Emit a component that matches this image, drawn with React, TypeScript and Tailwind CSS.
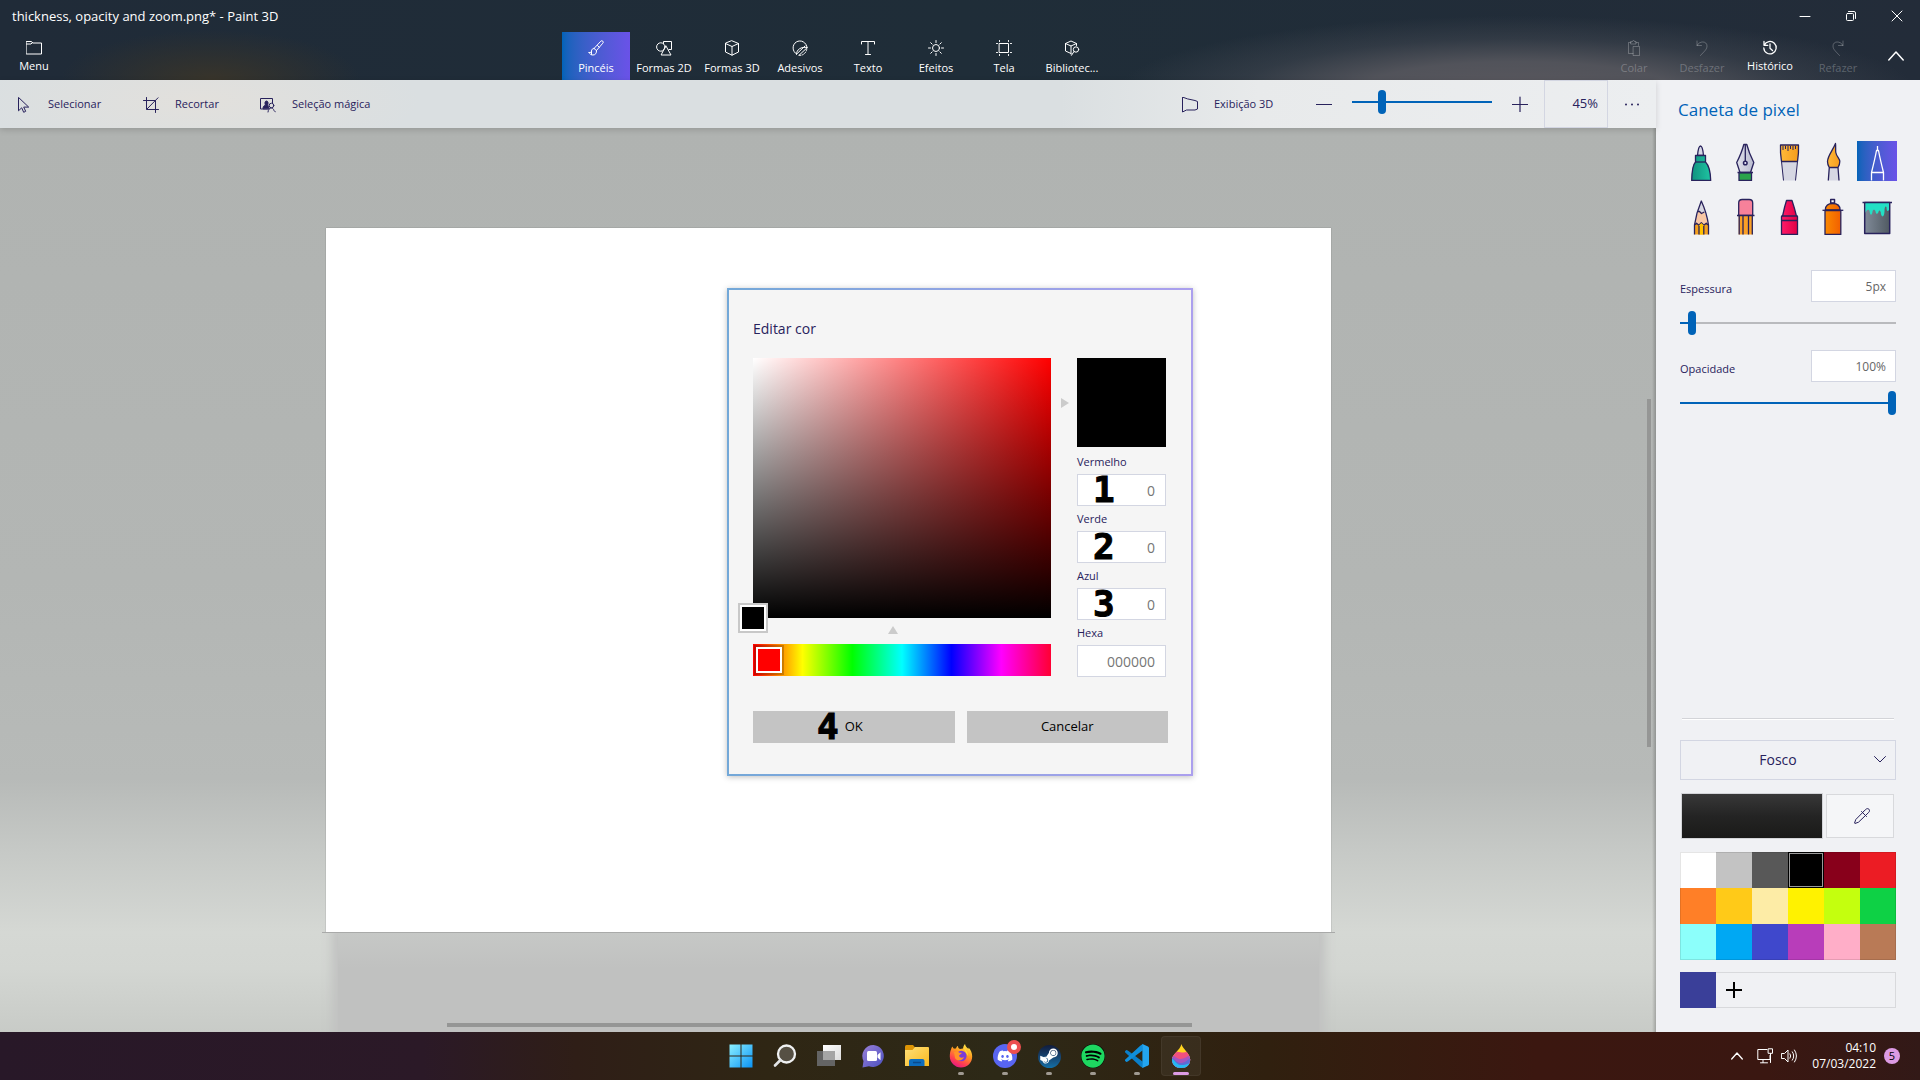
import { useState, type ReactNode } from "react";
import { FaDiscord, FaSpotify, FaSteamSymbol } from "react-icons/fa";

const line = {
  fill: "none",
  stroke: "currentColor",
  strokeWidth: 1,
  strokeLinecap: "round",
  strokeLinejoin: "round",
} as const;

function Icon({ children, size = 16 }: { children: ReactNode; size?: number }) {
  return (
    <svg width={size} height={size} viewBox="0 0 16 16" aria-hidden="true" className="shrink-0" {...line}>
      {children}
    </svg>
  );
}

/* ---------- ribbon icons ---------- */

const FolderIcon = () => (
  <Icon>
    <path d="M.5 1.500h5l1 1.500h9v11H.5zM.5 4h4.500l1.500-1.500" />
  </Icon>
);
const BrushIcon = () => (
  <Icon>
    <path d="M6 8.500 12.800 1.200a1.400 1.400 0 0 1 2 2L8.500 10.500M6 8.500l2.500 2M6 8.500c-1.500 0-2.500 1-2.500 2.500 0 1.200-.8 1.800-2.500 1.500M8.500 10.500c.3 2.500-1 4.500-3.500 4.500-2 0-3.300-.9-4-2.500M9.500 5.500l1.800 1.800M3.500 11.500v3" />
  </Icon>
);
const Shapes2DIcon = () => (
  <Icon>
    <circle cx="4.800" cy="7" r="4.200" />
    <path d="M7.500 3.500v-2h8v8h-2.500M10 6l5 9H5.500z" />
  </Icon>
);
const CubeIcon = () => (
  <Icon>
    <path d="M8 .8 14.500 3.500v8.500L8 15.200 1.500 12V3.500zM1.500 3.500 8 6.500l6.500-3M8 6.500v8.700" />
  </Icon>
);
const StickerIcon = () => (
  <Icon>
    <path d="M4.500 14A7 7 0 1 1 15 7.500M4.500 14C4.500 9.500 9 6.500 15 7.500M4.500 14.200 13 6M7 15.300l8-7.500" />
    <path d="M7 15.300c4 .5 7.500-2.500 8-7.300" strokeDasharray="1.500 1.500" />
  </Icon>
);
const TextIcon = () => (
  <Icon>
    <path d="M1.500 4V1.500h13V4M8 1.500v13M5.500 14.500h5" />
  </Icon>
);
const EffectsIcon = () => (
  <Icon>
    <circle cx="8" cy="8" r="3.500" />
    <path d="M8 .5v2M8 13.500v2M.5 8h2M13.500 8h2M2.700 2.700l1.400 1.400M11.900 11.900l1.400 1.400M13.300 2.700l-1.400 1.400M4.100 11.900l-1.400 1.400" />
  </Icon>
);
const CanvasIcon = () => (
  <Icon>
    <path d="M3.500 3.500h9v9h-9zM3.500.5v1M12.500.5v1M3.500 14.500v1M12.500 14.500v1M.5 3.500h1M.5 12.500h1M14.500 3.500h1M14.500 12.500h1" />
  </Icon>
);
const LibraryIcon = () => (
  <Icon>
    <path d="M7 13.500 1.500 11V3.500L7 1l5.500 2.500v2M1.500 3.500 7 6l5.500-2.500M7 6v8" />
    <circle cx="12" cy="9.500" r="2.700" />
    <path d="m10 11.500-2.500 3.800" />
  </Icon>
);
const PasteIcon = () => (
  <Icon>
    <path d="M7 13.500H2.500v-11h2.500M10 2.500h2.500v3M5 1.500h1.500a1 1 0 0 1 2 0H10v2.500H5zM7.500 6.500h6v9h-6z" />
  </Icon>
);
const UndoIcon = () => (
  <Icon>
    <path d="M3 1v4.500h4.500M3 5.500C5.500.5 13 .8 13 6c0 3.500-3 5.500-6.500 9.500" />
  </Icon>
);
const RedoIcon = () => (
  <Icon>
    <path d="M13 1v4.500H8.500M13 5.500C10.500.5 3 .8 3 6c0 3.500 3 5.500 6.500 9.500" />
  </Icon>
);
const HistoryIcon = () => (
  <Icon>
    <path strokeWidth="1.300" d="M2 1.500v3.800h3.800M2.300 5.200A6.200 6.200 0 1 1 1.800 8M8 4v4.200l2.500 2.300" />
  </Icon>
);

/* ---------- toolbar icons ---------- */

const CursorIcon = () => (
  <Icon>
    <path d="M2.500.8v13l3.200-3 2 4.500 2-1-2-4.200h4.600z" />
  </Icon>
);
const CropIcon = () => (
  <Icon>
    <path d="M3.500.5v12h12M.5 3.500h12v12M4 12 15 .8" />
  </Icon>
);
const MagicIcon = () => (
  <Icon>
    <path d="M7.500 12H.5V1.500h12V6" />
    <path fill="currentColor" d="M3 11.500c0-2 1-3 2.500-3.200C4.500 6 5 4 6.500 4S8.500 6 7.700 8L9 11.500z" />
    <circle cx="11.500" cy="8.500" r="2.300" />
    <path d="M8 15c.2-2.500 1.500-4 3.500-4 1.200 0 2 1 2.500 2.500l1.500 1.500" />
  </Icon>
);
const View3DIcon = () => (
  <Icon>
    <path d="M.5.5v14.500l4-2h8.500l2.500-1V4.500L13 3.500 6 2z" />
  </Icon>
);
const EyedropperIcon = () => (
  <Icon>
    <path d="m8.500 4.500 3.200-3c1-1 2.200-1.200 3.200-.3.900 1 .8 2.200-.2 3.200L11.500 7.500M7.500 3.500l5 5M8.500 4.700 1.800 11.500.5 15.100l.4.400 3.600-1.300L11.500 7.500" />
  </Icon>
);

/* ---------- brush gallery drawings ---------- */

const ink = "#28225c";
function Tool({ children }: { children: ReactNode }) {
  return (
    <svg viewBox="0 0 40 40" className="size-10" fill="none" stroke={ink} strokeWidth="1.300" strokeLinejoin="round" aria-hidden="true">
      {children}
    </svg>
  );
}

const tools = [
  {
    name: "Marcador",
    art: (
      <Tool>
        <path fill="#d6d7e3" d="M16.500 14.500C17 9 18 5 19.500 5s2.500 4 3 9.500z" />
        <path fill="url(#g-teal)" d="M14.500 14.500h10V21c3 3 5 9 5.200 18.500h-19C10.900 30 11.500 24 14.500 21z" />
        <path d="M14.500 21h10" />
      </Tool>
    ),
  },
  {
    name: "Caneta de caligrafia",
    art: (
      <Tool>
        <path fill="#2aa34b" d="M14 31.500h12.500v8H14z" />
        <path fill="url(#g-steel)" d="M18.800 3.500h3c1.500 6 3.700 11.500 7 18l-3.300 10h-10.500l-3.300-10c3.300-6.500 5.600-12 7.100-18z" />
        <path d="M20.300 4v16M12.500 31.500h15.500" />
        <circle cx="20.300" cy="22" r="1.800" fill="#eef" strokeWidth="1.500" />
      </Tool>
    ),
  },
  {
    name: "Pincel a óleo",
    art: (
      <Tool>
        <path fill="#d6d7e3" stroke="none" d="M12.500 20.500h16l-2 19h-12z" />
        <path fill="url(#g-gold)" d="M11.500 4h18q.4 8-1 16.500h-16Q11.100 12 11.500 4z" />
        <path d="m12.500 20.500 2 19M28.500 20.500l-2 19M14 5v4M16.500 5v3M19 5v5M21.500 5v3M24 5v4M26.500 5v3" strokeWidth="1" />
      </Tool>
    ),
  },
  {
    name: "Aquarela",
    art: (
      <Tool>
        <path fill="#d6d7e3" stroke="none" d="M16 26.500h9.500l.5 13H15z" />
        <path fill="url(#g-gold)" d="M22.500 2.500C20 9 14.500 15 14.500 20.500c0 2 .5 4 1.800 6h8.700c1.300-2 1.800-4 1.800-6 0-3-3.300-5-4-9-.4-3 .1-6-.3-9z" />
        <path d="m16.300 26.500-1 13M25 26.500l1 13" />
      </Tool>
    ),
  },
  {
    name: "Caneta de pixel",
    art: (
      <Tool>
        <path stroke="#fff" d="M14.500 39.500v-8c1.500-6 3.700-15 5-22h2c1.300 7 3.500 16 5 22v8M14.500 31.500h12M20.500 9.500V5" />
      </Tool>
    ),
  },
  {
    name: "Lápis",
    art: (
      <Tool>
        <path fill="#f9c7a4" stroke="none" d="M20.300 6 27.500 29v2h-14v-2z" />
        <path fill="#d6d7e3" stroke="none" d="m20.300 6 3.500 12-6.500-2z" />
        <path fill="#f5a01d" d="m13.500 39.500v-9.500l2-1.800 2.500 2 2.300-2.500 2.500 2.500 2.500-2 2.200 2v9.300" />
        <path fill="#ffc000" stroke="none" d="M18 30.500 20.300 28l2.500 2.500v9H18z" />
        <path d="M13.500 30c1.300-8.500 3.800-17 6.800-24 3.200 7 6 15.500 7.200 24M18 31v8.500M22.800 31v8.500M16.500 16.500h2l2 2 2.800-1.500" />
      </Tool>
    ),
  },
  {
    name: "Borracha",
    art: (
      <Tool>
        <path fill="#f7819a" d="M13.700 20.500V8q0-3.500 3.500-3.500h7q3.500 0 3.500 3.500v12.500z" />
        <path fill="#fba026" stroke="none" d="M13.700 20.500h14v19h-14z" />
        <path d="M12 20.500h17.500M14.200 20.500v19M27.300 20.500v19M18 20.500v19M23.500 20.500v19" />
      </Tool>
    ),
  },
  {
    name: "Giz de cera",
    art: (
      <Tool>
        <path fill="url(#g-pink)" d="M17.500 5.500h5.500c1.500 4.500 3.200 10 4.300 15l1.200 1v18h-16v-18l1.200-1c1-5 2.300-10.500 3.800-15z" />
        <path d="M12.500 21h16M12.500 25.500h16" />
      </Tool>
    ),
  },
  {
    name: "Spray",
    art: (
      <Tool>
        <path fill="#fff" strokeWidth="1.500" d="M17.700 4.500h3.800V8h-3.800z" />
        <path fill="url(#g-orange)" d="M12.300 15c0-4.500 3-6.500 7.300-6.500s7.500 2 7.500 6.500zM12 15.500h15.800v24H12z" />
        <path d="M9.500 15.300h20.800" />
      </Tool>
    ),
  },
  {
    name: "Preenchimento",
    art: (
      <Tool>
        <path fill="url(#g-slate)" strokeWidth="1.500" d="M7.700 7.500h25v31h-25z" />
        <path fill="#23e0c5" stroke="none" d="M8.500 8h23.500v7c-1.500 2-2.500 1-2.500-3-1-1.500-2 0-2 4 0 7-3.500 7-3.800 1-.8-2-1.900-2-2.200 0-1 2.500-2.500 2.500-3-.5-.6-2.500-2.500-2.500-3 0-.5 4.500-2.500 4-3-.5-.5-2-3-2-4 2z" />
        <path strokeWidth="1.500" d="M5.500 7.500h29.500" />
      </Tool>
    ),
  },
];

function Gradients() {
  const list: [string, string, string][] = [
    ["g-teal", "#10927f", "#1fc4a2"],
    ["g-steel", "#dfe0ea", "#b9bbcf"],
    ["g-gold", "#ffb93a", "#f59c1c"],
    ["g-pink", "#ff1a68", "#e00045"],
    ["g-orange", "#fb8a00", "#f25f00"],
    ["g-slate", "#808a98", "#505a62"],
  ];
  return (
    <svg className="absolute size-0" aria-hidden="true">
      <defs>
        {list.map(([id, a, b]) => (
          <linearGradient key={id} id={id}>
            <stop stopColor={a} />
            <stop offset="1" stopColor={b} />
          </linearGradient>
        ))}
      </defs>
    </svg>
  );
}

/* ---------- header ---------- */

const tabs = [
  { label: "Pincéis", icon: <BrushIcon /> },
  { label: "Formas 2D", icon: <Shapes2DIcon /> },
  { label: "Formas 3D", icon: <CubeIcon /> },
  { label: "Adesivos", icon: <StickerIcon /> },
  { label: "Texto", icon: <TextIcon /> },
  { label: "Efeitos", icon: <EffectsIcon /> },
  { label: "Tela", icon: <CanvasIcon /> },
  { label: "Bibliotec...", icon: <LibraryIcon /> },
];

function RibbonButton({ icon, label, active, dim }: { icon: ReactNode; label: string; active?: boolean; dim?: boolean }) {
  return (
    <button
      type="button"
      disabled={dim}
      className={
        "flex h-12 w-[68px] flex-col items-center gap-1 pt-2 text-[11px] leading-4 whitespace-nowrap " +
        (active ? "bg-linear-to-r from-[#0063b8] to-[#6a52e8] text-white" : dim ? "text-white/25" : "text-white")
      }
    >
      {icon}
      <span>{label}</span>
    </button>
  );
}

function Header() {
  return (
    <header className="bg-[#202b37] bg-[radial-gradient(ellipse_150px_50px_at_11%_100%,#38342a_0%,transparent_100%),radial-gradient(ellipse_400px_76px_at_79%_115%,rgba(90,88,94,1)_0%,rgba(84,85,92,0.95)_40%,rgba(70,75,84,0.45)_70%,rgba(50,58,68,0)_100%),linear-gradient(90deg,#202b38,#1f2d38_50%,#232c39)] text-white">
      <div className="flex h-8 items-center justify-between">
        <h1 className="pt-0.5 pl-3 text-[13px]">thickness, opacity and zoom.png* - Paint 3D</h1>
        <div className="flex">
          <button type="button" aria-label="Minimizar" className="grid h-8 w-[46px] place-items-center">
            <Icon>
              <path d="M3 8.500h10" />
            </Icon>
          </button>
          <button type="button" aria-label="Restaurar" className="grid h-8 w-[46px] place-items-center">
            <Icon>
              <rect x="3.500" y="5.500" width="7" height="7" rx="1" />
              <path d="M5.500 3.500h5.500q1.500 0 1.500 1.500v5.500" />
            </Icon>
          </button>
          <button type="button" aria-label="Fechar" className="grid h-8 w-[46px] place-items-center">
            <Icon>
              <path d="m3 3 10 10M13 3 3 13" />
            </Icon>
          </button>
        </div>
      </div>
      <div className="flex justify-between">
        <button type="button" className="flex h-12 w-[68px] flex-col items-center gap-0.5 pt-2 text-[11px] leading-4">
          <FolderIcon />
          <span>Menu</span>
        </button>
        <nav className="flex">
          {tabs.map((t, i) => (
            <RibbonButton key={t.label} {...t} active={i === 0} />
          ))}
        </nav>
        <div className="flex">
          <RibbonButton icon={<PasteIcon />} label="Colar" dim />
          <RibbonButton icon={<UndoIcon />} label="Desfazer" dim />
          <button type="button" className="flex h-12 w-[68px] flex-col items-center gap-0.5 pt-2 text-[11px] leading-4">
            <HistoryIcon />
            <span>Histórico</span>
          </button>
          <RibbonButton icon={<RedoIcon />} label="Refazer" dim />
          <button type="button" aria-label="Recolher" className="grid h-12 w-12 place-items-center">
            <Icon>
              <path strokeWidth="1.500" d="m.8 12 7.200-8 7.200 8" />
            </Icon>
          </button>
        </div>
      </div>
    </header>
  );
}

/* ---------- sliders ---------- */

function Slider({ label, value, onChange, rest }: { label: string; value: number; onChange: (n: number) => void; rest: string }) {
  return (
    <input
      type="range"
      aria-label={label}
      value={value}
      onChange={(e) => onChange(Number(e.target.value))}
      style={{ backgroundImage: `linear-gradient(90deg,#0063b8 ${value}%,${rest} ${value}%)` }}
      className="block h-6 w-full appearance-none bg-[length:100%_2px] bg-center bg-no-repeat [&::-webkit-slider-thumb]:h-6 [&::-webkit-slider-thumb]:w-2 [&::-webkit-slider-thumb]:appearance-none [&::-webkit-slider-thumb]:rounded-full [&::-webkit-slider-thumb]:bg-[#0063b8]"
    />
  );
}

function Toolbar() {
  const [zoom, setZoom] = useState(20);
  return (
    <div className="relative z-10 flex h-12 justify-between bg-[#dadfe1] bg-[radial-gradient(ellipse_220px_60px_at_200px_20px,#e2e0dc_0%,transparent_100%),linear-gradient(90deg,rgba(236,238,240,0)_64%,#e8eaeb_76%,#eceef0_100%)] text-[11px] text-[#28225c] shadow-[0_2px_6px_rgba(0,0,0,0.15)]">
      <div className="flex pt-px pl-4">
        <button type="button" className="flex w-[127px] items-center gap-4">
          <CursorIcon />
          Selecionar
        </button>
        <button type="button" className="flex w-[117px] items-center gap-4">
          <CropIcon />
          Recortar
        </button>
        <button type="button" className="flex items-center gap-4">
          <MagicIcon />
          Seleção mágica
        </button>
      </div>
      <div className="flex">
        <button type="button" className="flex w-[118px] items-center gap-4 pt-px">
          <View3DIcon />
          Exibição 3D
        </button>
        <button type="button" aria-label="Reduzir" className="grid w-12 place-items-center">
          <Icon>
            <path strokeWidth="1.200" d="M.5 8.500h15" />
          </Icon>
        </button>
        <div className="mx-1 w-[140px] pt-[10px]">
          <Slider label="Zoom" value={zoom} onChange={setZoom} rest="#0063b8" />
        </div>
        <button type="button" aria-label="Ampliar" className="grid w-12 place-items-center">
          <Icon>
            <path strokeWidth="1.200" d="M.5 8.500h15M8 1v15" />
          </Icon>
        </button>
        <input
          aria-label="Porcentagem de zoom"
          defaultValue="45%"
          className="w-16 border border-[#d3d6e2] pr-[9px] text-right text-[13px]"
        />
        <button type="button" aria-label="Mais opções" className="grid w-12 place-items-center">
          <svg width="16" height="4" viewBox="0 0 16 4" fill="currentColor" aria-hidden="true">
            <circle cx="2" cy="2.500" r="1" />
            <circle cx="8" cy="2.500" r="1" />
            <circle cx="14" cy="2.500" r="1" />
          </svg>
        </button>
      </div>
    </div>
  );
}

/* ---------- workspace ---------- */

function Workspace() {
  return (
    <main className="relative flex flex-1 flex-col items-center overflow-hidden bg-[linear-gradient(180deg,#b0b3b1_0%,#b3b6b4_50%,#b7bab8_72%,#c6c9c6_80%,#d5d8d4_89%,#d3d6d2_93%,#c8cbc7_100%)]">
      <div className="z-10 mt-[100px] w-[61%] max-w-[1005px] flex-1 bg-white shadow-[0_0_1px_rgba(0,0,0,0.4)]" />
      <div className="z-10 h-px w-[62%] max-w-[1013px] bg-[#a9aaa9]" />
      <div className="h-[99px] w-[61%] max-w-[1005px] px-3">
        <div className="h-[140px] bg-linear-to-b from-[#c6c8c6] to-[#c0c1c0] to-25% shadow-[0_0_10px_6px_#c1c2c1]" />
      </div>
      <div className="absolute bottom-[5px] left-[27%] z-10 h-1 w-[45%] bg-[#959695]" />
      <div className="absolute top-[30%] right-[5px] h-[348px] w-1 bg-[#959695]" />
      <div className="absolute inset-y-0 right-0 w-1 bg-linear-to-l from-black/20 to-transparent" />
    </main>
  );
}

/* ---------- side panel ---------- */

const palette = [
  { name: "Branco", cls: "bg-white" },
  { name: "Cinza claro", cls: "bg-[#c3c3c3]" },
  { name: "Cinza escuro", cls: "bg-[#585858]" },
  { name: "Preto", cls: "bg-black outline outline-[#9a9a9a] -outline-offset-2" },
  { name: "Vermelho escuro", cls: "bg-[#88001b]" },
  { name: "Vermelho", cls: "bg-[#ec1c24]" },
  { name: "Laranja", cls: "bg-[#ff7f27]" },
  { name: "Dourado", cls: "bg-[#ffca18]" },
  { name: "Bege", cls: "bg-[#fdeca6]" },
  { name: "Amarelo", cls: "bg-[#fff200]" },
  { name: "Lima", cls: "bg-[#c4ff0e]" },
  { name: "Verde", cls: "bg-[#0ed145]" },
  { name: "Turquesa", cls: "bg-[#8cfffb]" },
  { name: "Azul claro", cls: "bg-[#00a8f3]" },
  { name: "Índigo", cls: "bg-[#3f48cc]" },
  { name: "Roxo", cls: "bg-[#b83dba]" },
  { name: "Rosa", cls: "bg-[#ffaec8]" },
  { name: "Marrom", cls: "bg-[#b97a56]" },
];

function SidePanel() {
  const [size, setSize] = useState(4);
  const [opacity, setOpacity] = useState(100);
  return (
    <aside className="flex w-[264px] shrink-0 flex-col bg-[#f0f1f4] px-6 pt-4 pb-6 text-[#28225c]">
      <h2 className="-ml-0.5 text-[17px] leading-7 text-[#0063b8]">Caneta de pixel</h2>
      <div className="mt-[17px] -mr-px grid grid-cols-[repeat(5,40px)] justify-end gap-x-1 gap-y-[14px]">
        {tools.map((t, i) => (
          <button
            key={t.name}
            type="button"
            aria-label={t.name}
            className={i === 4 ? "h-10 bg-linear-to-r from-[#0063b8] to-[#6a52e8]" : "h-10"}
          >
            {t.art}
          </button>
        ))}
      </div>

      <div className="mt-[35px] flex justify-between">
        <label htmlFor="size" className="pt-[11px] text-[11px] leading-4">
          Espessura
        </label>
        <input id="size" defaultValue="5px" className="h-8 w-[85px] border border-[#d3d6e2] bg-white px-[9px] text-right text-xs text-[#666]" />
      </div>
      <div className="mt-[9px]">
        <Slider label="Espessura" value={size} onChange={setSize} rest="#b9babd" />
      </div>
      <div className="mt-[15px] flex justify-between">
        <label htmlFor="opacity" className="pt-[11px] text-[11px] leading-4">
          Opacidade
        </label>
        <input id="opacity" defaultValue="100%" className="h-8 w-[85px] border border-[#d3d6e2] bg-white px-[9px] text-right text-xs text-[#666]" />
      </div>
      <div className="mt-[9px]">
        <Slider label="Opacidade" value={opacity} onChange={setOpacity} rest="#b9babd" />
      </div>

      <div className="mx-0.5 mt-auto border-t border-b border-t-[#d3d4d8] border-b-white" />
      <div className="relative mt-5">
        <select
          aria-label="Material"
          defaultValue="Fosco"
          className="block h-10 w-full appearance-none border border-[#d3d6e2] pr-5 text-center text-sm [text-align-last:center]"
        >
          <option>Fosco</option>
        </select>
        <svg width="12" height="7" viewBox="0 0 12 7" className="pointer-events-none absolute top-4 right-[10px]" aria-hidden="true" {...line}>
          <path d="m.5.5 5.500 5.500L11.500.5" />
        </svg>
      </div>
      <div className="mt-[13px] flex items-center gap-[3px] pr-0.5 pl-px">
        <button type="button" aria-label="Cor atual" className="h-[46px] flex-1 border border-[#d3d4d8] bg-linear-to-b from-[#383838] via-[#242424] to-[#1a1a19]" />
        <button type="button" aria-label="Conta-gotas" className="grid h-11 w-[68px] place-items-center border border-[#d8d9dc] bg-[#f5f6f8] pl-1">
          <EyedropperIcon />
        </button>
      </div>
      <div className="relative mt-[13px] grid grid-cols-6 after:pointer-events-none after:absolute after:inset-0 after:border after:border-black/10">
        {palette.map((c) => (
          <button key={c.name} type="button" aria-label={c.name} className={"h-9 " + c.cls} />
        ))}
      </div>
      <div className="mt-3 flex h-9 border border-l-0 border-[#d8d9dc]">
        <button type="button" aria-label="Cor personalizada" className="-my-px w-9 bg-[#3a3f99]" />
        <button type="button" aria-label="Adicionar cor" className="grid w-9 place-items-center text-black">
          <Icon>
            <path strokeWidth="2" strokeLinecap="butt" d="M0 8h16M8 0v16" />
          </Icon>
        </button>
      </div>
    </aside>
  );
}

/* ---------- colour dialog ---------- */

function Mark({ children, place }: { children: string; place: string }) {
  return (
    <span
      className={
        "pointer-events-none absolute font-['DejaVu_Sans_Mono',monospace] text-[36px] leading-8 font-bold text-black [-webkit-text-stroke:1px_black] " + place
      }
    >
      {children}
    </span>
  );
}

const channels = [
  { id: "r", label: "Vermelho", value: "0", mark: "1" },
  { id: "g", label: "Verde", value: "0", mark: "2" },
  { id: "b", label: "Azul", value: "0", mark: "3" },
  { id: "hex", label: "Hexa", value: "000000", mark: "" },
];

function ColorDialog() {
  return (
    <div className="pointer-events-none fixed inset-0 z-20 flex items-center justify-center pb-4">
      <section
        role="dialog"
        aria-label="Editar cor"
        className="pointer-events-auto w-[466px] bg-linear-to-r from-[#73a8d8] to-[#ab9fee] p-0.5 shadow-[0_1px_6px_rgba(0,0,0,0.25)]"
      >
        <div className="bg-[#f5f5f5] pt-[27px] pr-[23px] pb-[31px] pl-6">
          <h2 className="text-sm leading-6 text-[#28225c]">Editar cor</h2>
          <div className="mt-[17px] flex">
            <div className="w-[298px]">
              <div className="relative h-[260px] bg-[linear-gradient(0deg,#000,transparent),linear-gradient(90deg,#fff,#f00)]">
                <div className="absolute -bottom-[13px] -left-[13px] size-[26px] border-2 border-white bg-black outline-2 outline-[#c8c8c8]" />
              </div>
              <svg width="10" height="8" viewBox="0 0 10 8" fill="#cbcbcb" className="mt-2 ml-[135px]" aria-hidden="true">
                <path d="M5 0l5 8H0z" />
              </svg>
              <input
                type="range"
                aria-label="Matiz"
                defaultValue={0}
                className="mt-[10px] block h-8 w-full appearance-none bg-[linear-gradient(90deg,#f00,#ff0_16.6%,#0f0_33.3%,#0ff_50%,#00f_66.6%,#f0f_83.3%,#f03)] px-[3px] [&::-webkit-slider-thumb]:size-[26px] [&::-webkit-slider-thumb]:appearance-none [&::-webkit-slider-thumb]:border-2 [&::-webkit-slider-thumb]:border-white [&::-webkit-slider-thumb]:bg-[#f00] [&::-webkit-slider-thumb]:shadow-[0_0_0_2px_rgba(0,0,0,0.2)]"
              />
            </div>
            <svg width="8" height="10" viewBox="0 0 8 10" fill="#cbcbcb" className="mr-2 ml-[10px] mt-10" aria-hidden="true">
              <path d="M0 0l8 5-8 5z" />
            </svg>
            <div className="w-[89px]">
              <div className="mb-[7px] h-[89px] bg-black" />
              {channels.map((c) => (
                <div key={c.id} className="relative mb-[5px] last:mb-0">
                  <label htmlFor={c.id} className="block text-[11px] leading-4 text-[#28225c]">
                    {c.label}
                  </label>
                  <input
                    id={c.id}
                    defaultValue={c.value}
                    className="mt-1 block h-8 w-full border border-[#d3d6e2] bg-white px-[10px] text-right text-sm text-[#767676]"
                  />
                  {c.mark && <Mark place="bottom-0 left-4">{c.mark}</Mark>}
                </div>
              ))}
            </div>
          </div>
          <div className="mt-[34px] grid grid-cols-2 gap-3">
            <button type="button" className="relative h-8 bg-[#c4c4c4] text-[13px] text-black">
              OK
              <Mark place="top-0 left-16">4</Mark>
            </button>
            <button type="button" className="h-8 bg-[#c4c4c4] text-[13px] text-black">
              Cancelar
            </button>
          </div>
        </div>
      </section>
    </div>
  );
}

/* ---------- taskbar ---------- */

function Art({ children }: { children: ReactNode }) {
  return (
    <svg width="24" height="24" viewBox="0 0 24 24" aria-hidden="true">
      {children}
    </svg>
  );
}

const apps = [
  {
    name: "Iniciar",
    art: (
      <Art>
        <defs>
          <linearGradient id="win" x2="1" y2="1">
            <stop stopColor="#8cf0ff" />
            <stop offset="1" stopColor="#0a93f5" />
          </linearGradient>
        </defs>
        <path fill="url(#win)" d="M.5.5h11v11H.5zM12.500.5h11v11h-11zM.5 12.500h11v11H.5zM12.500 12.500h11v11h-11z" />
      </Art>
    ),
  },
  {
    name: "Pesquisar",
    art: (
      <Art>
        <circle cx="13.500" cy="10" r="8.500" fill="#565044" stroke="#f0f1f2" strokeWidth="2.300" />
        <path d="M7.500 16 2 21.500" stroke="#e2e4e6" strokeWidth="2.600" strokeLinecap="round" />
      </Art>
    ),
  },
  {
    name: "Visão de tarefas",
    art: (
      <Art>
        <defs>
          <linearGradient id="tv" x2="1" y2="1">
            <stop stopColor="#fff" />
            <stop offset="1" stopColor="#dcdcdc" />
          </linearGradient>
        </defs>
        <path fill="#646464" d="M0 7h18v15H0z" />
        <path fill="url(#tv)" d="M6 1h18v15H6z" />
        <path fill="#a5a5a5" d="M6 7h12v9H6z" />
      </Art>
    ),
  },
  {
    name: "Chat",
    art: (
      <Art>
        <defs>
          <linearGradient id="chat" x1="0" y1="0" x2="1" y2="1">
            <stop stopColor="#9a80d8" />
            <stop offset="1" stopColor="#4a50c0" />
          </linearGradient>
        </defs>
        <path fill="url(#chat)" d="M12.500 1A11 11 0 1 1 8 22.300L1.500 23.500 2.500 17A11 11 0 0 1 12.500 1z" />
        <rect x="6" y="7" width="10" height="10" rx="1.500" fill="#fff" />
        <path fill="#fff" d="m16.500 11 3-2.800v8l-3-2.700z" />
      </Art>
    ),
  },
  {
    name: "Explorador de Arquivos",
    art: (
      <Art>
        <defs>
          <linearGradient id="fold" x2="1" y2="1">
            <stop stopColor="#ffe07a" />
            <stop offset="1" stopColor="#f9b81c" />
          </linearGradient>
        </defs>
        <path fill="#dc9405" d="M0 2.500Q0 1 1.500 1H8l2.500 3v3H0z" />
        <path fill="url(#fold)" d="M0 6h7.500L10 3h13q1 0 1 1v18H0z" />
        <path fill="#0d6cbd" d="M4 22v-5q0-2 2-2h11.500q2 0 2 2v5z" />
        <path stroke="#0a4a8c" strokeWidth="1.500" d="M8 18.500h8" />
      </Art>
    ),
  },
  {
    name: "Firefox",
    running: true,
    art: (
      <Art>
        <defs>
          <linearGradient id="ff" x1=".8" y1="0" x2=".3" y2="1">
            <stop stopColor="#fff44f" />
            <stop offset=".4" stopColor="#ff9a1f" />
            <stop offset=".75" stopColor="#ff4050" />
            <stop offset="1" stopColor="#e31587" />
          </linearGradient>
        </defs>
        <path fill="url(#ff)" d="M2 5.500C2.500 3.500 3 3 3.500 2.500c.3 1 .8 1.700 1.500 2.300C6 4.300 6.500 4.300 7 4.500c.5-1.700 1-2 2-2.500 0 1.500.6 2.500 2 3l3-.5c.3-2 .8-3 2-4.500.5 2.500 2 3.500 3.500 5V3.500C22 6 23.200 9 23.200 12.500 23.200 19 18 23.500 12 23.500S.8 18.500.8 12.500c0-2.500.3-5 1.200-7z" />
        <circle cx="12.300" cy="12" r="5.300" fill="#7a3bd8" />
        <path fill="#ff9328" d="M5 8c2.500-1 4-.5 5.300.8h2.500c-.3 1.500-2.300 1.700-2.800 3 .5 2.200 3.500 2.200 5 1.200-1 4-7.500 4.800-9 1z" />
        <path fill="#ffd83c" d="M15.500 2.500c.5 4 3.500 5 3.700 9.500-1-1-1.200-2-1.700-2.500-1-2.500-3-3.500-2-7z" />
      </Art>
    ),
  },
  {
    name: "Discord",
    running: true,
    art: (
      <span className="relative grid size-6 place-items-center rounded-full bg-[#5865f2] text-white">
        <FaDiscord size={16} />
        <span className="absolute -top-1 -right-1 size-[14px] rounded-full border-4 border-[#ed4f50] bg-white" />
      </span>
    ),
  },
  {
    name: "Steam",
    running: true,
    art: (
      <span className="grid size-[23px] place-items-center rounded-full bg-linear-to-b from-[#101c3c] to-[#1270a8] text-white">
        <FaSteamSymbol size={20} />
      </span>
    ),
  },
  {
    name: "Spotify",
    running: true,
    art: (
      <span className="grid size-6 place-items-center rounded-full bg-black text-[#1ed760]">
        <FaSpotify size={24} />
      </span>
    ),
  },
  {
    name: "Visual Studio Code",
    running: true,
    art: (
      <Art>
        <path fill="#0a7fca" d="M17.500 6.500v11L2.800 6.600 1.300 6 0 7.300v1l15.500 14.200L18 24z" />
        <path fill="#0f8fdc" d="M17.500 17.500v-11L2.800 17.400l-1.500.6L0 16.700v-1L15.500 1.500 18 0z" />
        <path fill="#23a5f0" d="m17.500 0 5.500 2.500q1 .5 1 1.500v16q0 1-1 1.500L17.500 24z" />
      </Art>
    ),
  },
  {
    name: "Paint 3D",
    active: true,
    art: (
      <Art>
        <defs>
          <clipPath id="drop">
            <path d="M12.500 0c.3 4 8.700 9.500 8.700 15.500 0 5-3.700 8.500-9 8.500s-9.200-3.500-9.200-8.500C3 10 11 6.500 12.500 0z" />
          </clipPath>
        </defs>
        <g clipPath="url(#drop)">
          <path fill="#ffd31f" d="M0 0h24v24H0z" />
          <path fill="#f0507f" d="M0 9C8 6 9 8 13 8.500S19 7 24 5v19H0z" />
          <path fill="#a655c0" d="M0 11.500c6-1 7 3.500 11.500 3.500S19 12 24 9v15H0z" />
          <path fill="#5f6bd6" d="M0 13c5-.5 6 5.500 11 6S19 15 24 12.500V24H0z" />
          <path fill="#25b9f2" d="M0 14c5 0 6 5 9.500 6.500S17 20.500 24 18v6H0z" />
        </g>
      </Art>
    ),
  },
];

function Taskbar() {
  return (
    <footer className="relative flex h-12 items-center justify-center bg-[linear-gradient(90deg,#281828_0%,#2b1927_22%,#2f1e17_30%,#2f2614_40%,#2d2917_52%,#30200f_66%,#3b1710_80%,#3a1711_92%,#321917_100%)] text-white">
      <nav className="flex pl-0.5">
        {apps.map((a) => (
          <button key={a.name} type="button" aria-label={a.name} className="relative grid h-12 w-11 place-items-center">
            {a.active && <span className="absolute inset-x-0.5 inset-y-1 rounded border border-white/5 bg-white/5" />}
            <span className="relative grid size-6 place-items-center">{a.art}</span>
            {a.running && <span className="absolute bottom-[5px] h-[3px] w-1.5 rounded-full bg-[#a09a92]" />}
            {a.active && <span className="absolute bottom-[5px] h-[3px] w-4 rounded-full bg-[#dd9be4]" />}
          </button>
        ))}
      </nav>
      <div className="absolute inset-y-0 right-5 flex items-center">
        <button type="button" aria-label="Ícones ocultos" className="mr-[14px]">
          <svg width="12" height="8" viewBox="0 0 12 8" aria-hidden="true" {...line}>
            <path strokeWidth="1.300" d="m.7 7 5.300-6 5.300 6" />
          </svg>
        </button>
        <button type="button" aria-label="Rede e volume" className="flex gap-2">
          <Icon>
            <path d="M10 1.500H.8v10H13V7.500M6 11.500v3M3.500 14.800h7M11.500.8h4v4.500h-4zM13.500 5.500v9" />
          </Icon>
          <Icon>
            <path d="M.8 5.500h2.700L7 2v12l-3.500-3.500H.8zM9 5.800q1.500 2.200 0 4.400M11.300 3.800q3 4.200 0 8.400M13.500 2q4 6 0 12" />
          </Icon>
        </button>
        <time className="ml-[15px] text-right text-xs leading-4">
          <span className="block">04:10</span>
          <span className="block">07/03/2022</span>
        </time>
        <span className="ml-2 grid size-4 place-items-center rounded-full bg-[#dd9be4] text-[11px] leading-4 text-black">5</span>
      </div>
    </footer>
  );
}

export default function App() {
  return (
    <div className="flex h-screen flex-col overflow-hidden font-['Open_Sans',sans-serif]">
      <Gradients />
      <Header />
      <div className="flex min-h-0 flex-1">
        <div className="flex min-w-0 flex-1 flex-col">
          <Toolbar />
          <Workspace />
        </div>
        <SidePanel />
      </div>
      <Taskbar />
      <ColorDialog />
    </div>
  );
}
